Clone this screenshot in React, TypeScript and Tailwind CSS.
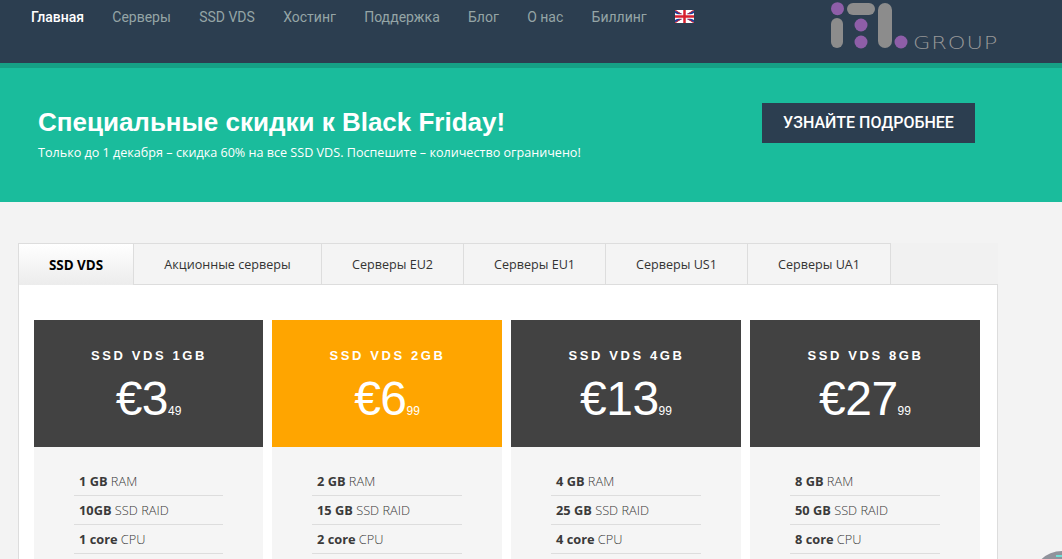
import React from "react";

const navItems = ["Главная", "Серверы", "SSD VDS", "Хостинг", "Поддержка", "Блог", "О нас", "Биллинг"];

const tabs = [
  { label: "SSD VDS", width: "w-[116px]" },
  { label: "Акционные серверы", width: "w-[188px]" },
  { label: "Серверы EU2", width: "w-[142px]" },
  { label: "Серверы EU1", width: "w-[142px]" },
  { label: "Серверы US1", width: "w-[142px]" },
  { label: "Серверы UA1", width: "w-[143px]" },
];

const plans = [
  { name: "SSD VDS 1GB", price: "€3", cents: "49", ram: "1 GB", ssd: "10GB", cpu: "1 core", accent: false, width: "w-[229px]" },
  { name: "SSD VDS 2GB", price: "€6", cents: "99", ram: "2 GB", ssd: "15 GB", cpu: "2 core", accent: true, width: "w-[230px]" },
  { name: "SSD VDS 4GB", price: "€13", cents: "99", ram: "4 GB", ssd: "25 GB", cpu: "4 core", accent: false, width: "w-[230px]" },
  { name: "SSD VDS 8GB", price: "€27", cents: "99", ram: "8 GB", ssd: "50 GB", cpu: "8 core", accent: false, width: "w-[230px]" },
];

function Flag() {
  return (
    <svg width="19" height="13" viewBox="0 0 19 13" className="-mt-px block">
      <rect width="19" height="13" fill="#fff" />
      <path d="M0 1.5L19 11.5M19 1.5L0 11.5" stroke="#1f3f9c" strokeWidth="2.5" />
      <path d="M0 0L19 13M19 0L0 13" stroke="#d8202f" strokeWidth="1" />
      <path d="M9.5 0V13M0 6.5H19" stroke="#fff" strokeWidth="4.5" />
      <path d="M9.5 0V13M0 6.5H19" stroke="#d8202f" strokeWidth="2.5" />
    </svg>
  );
}

function Logo() {
  return (
    <div className="mr-[64px] ml-auto flex items-start">
      <svg width="78" height="49" viewBox="0 0 78 49" className="block">
        <circle cx="7.5" cy="8.7" r="6.5" fill="#8e5ea8" />
        <rect x="1" y="18" width="12" height="30" rx="6" fill="#8c8c8c" />
        <rect x="17" y="3" width="28" height="12" rx="6" fill="#8c8c8c" />
        <circle cx="31" cy="25" r="6.5" fill="#8e5ea8" />
        <circle cx="31" cy="42" r="6.5" fill="#8e5ea8" />
        <rect x="48" y="3" width="14" height="45" rx="7" fill="#8c8c8c" />
        <circle cx="71" cy="42" r="6.5" fill="#8e5ea8" />
      </svg>
      <span className="mt-[32px] ml-[5px] w-[85px] origin-left scale-x-125 font-['DejaVu_Sans'] text-[18px] leading-[21px] font-extralight tracking-[0.7px] whitespace-nowrap text-[#999]">
        GROUP
      </span>
    </div>
  );
}

function PlanCard({ plan }: { plan: (typeof plans)[number] }) {
  return (
    <div className={`${plan.width} shrink-0`}>
      <div className={`h-[127px] pt-[28px] text-center text-white ${plan.accent ? "bg-[#ffa500]" : "bg-[#424242]"}`}>
        <div className="pl-px font-['Liberation_Sans'] text-[13px] leading-4 font-bold tracking-[2.6px]">{plan.name}</div>
        <div className="mt-[7px] font-['Liberation_Sans'] text-[48px] leading-[56px] tracking-[-0.5px]">
          {plan.price}
          <span className="text-[12px] leading-none tracking-normal">{plan.cents}</span>
        </div>
      </div>
      <div className="bg-[#f5f5f5] px-[40px] pt-5 font-['Open_Sans'] text-[12.8px] text-[#3a3a3a]">
        {[
          [plan.ram, "RAM"],
          [plan.ssd, "SSD RAID"],
          [plan.cpu, "CPU"],
        ].map(([value, unit]) => (
          <div key={unit} className="h-[29px] border-b border-[#ddd] px-[5px] leading-[28px]">
            <b className="font-bold">{value}</b> <span className="font-light">{unit}</span>
          </div>
        ))}
        <div className="h-[10px]" />
      </div>
    </div>
  );
}

export default function App() {
  return (
    <div className="relative h-[559px] overflow-hidden bg-[#f3f3f3] font-['Roboto']">
      {/* Header */}
      <header className="flex h-[68px] border-b-[5px] border-[#16a085] bg-[#2c3e50]">
        <nav className="flex h-[34px] items-center gap-[28.3px] pl-[31px] text-[14px] text-[#95a5a6]">
          {navItems.map((item, i) => (
            <span key={item} className={i === 0 ? "font-medium text-white" : ""}>
              {item}
            </span>
          ))}
          <Flag />
        </nav>
        <Logo />
      </header>

      {/* Banner */}
      <section className="flex h-[134px] items-start justify-between bg-[#1abc9c] pr-[87px] pl-[38px] text-white">
        <div className="pt-[36px]">
          <h1 className="font-['Liberation_Sans'] text-[26px] leading-[36px] font-bold">Специальные скидки к Black Friday!</h1>
          <p className="mt-[5px] font-['Open_Sans'] text-[12.6px] leading-4">
            Только до 1 декабря – скидка 60% на все SSD VDS. Поспешите – количество ограничено!
          </p>
        </div>
        <div className="mt-[35px] flex h-10 w-[213px] items-center justify-center bg-[#2c3e50] text-[16px] font-medium">УЗНАЙТЕ ПОДРОБНЕЕ</div>
      </section>

      {/* Tabs */}
      <main className="pt-[41px] pl-[18px]">
        <div className="w-[980px]">
          <div className="flex h-[42px] font-['Open_Sans'] text-[12.6px] text-[#333]">
            {tabs.map((tab, i) => (
              <div
                key={tab.label}
                className={`flex items-center justify-center border-t-1 border-r-1 border-[#ddd] pt-[2px] ${tab.width} ${
                  i === 0 ? "border-l-1 bg-gradient-to-b from-white to-[#ececec] text-[13.4px] font-bold text-black" : "border-b-1 bg-[#f4f4f4]"
                }`}
              >
                {tab.label}
              </div>
            ))}
            <div className="flex-1 border-b-1 border-[#ddd] bg-[#f1f1f1]" />
          </div>
          <div className="flex gap-[9px] border-x-1 border-[#ddd] bg-white pt-[35px] pl-[15px]">
            {plans.map((plan) => (
              <PlanCard key={plan.name} plan={plan} />
            ))}
          </div>
        </div>
      </main>

      {/* Chat widget, cut off by the window */}
      <div className="absolute top-[551px] left-[1032px] h-[60px] w-[60px] rounded-full bg-[#90939c]">
        <div className="absolute top-[4px] left-[24px] h-[2px] w-[8px] bg-[#6fe0d6]" />
      </div>
    </div>
  );
}
